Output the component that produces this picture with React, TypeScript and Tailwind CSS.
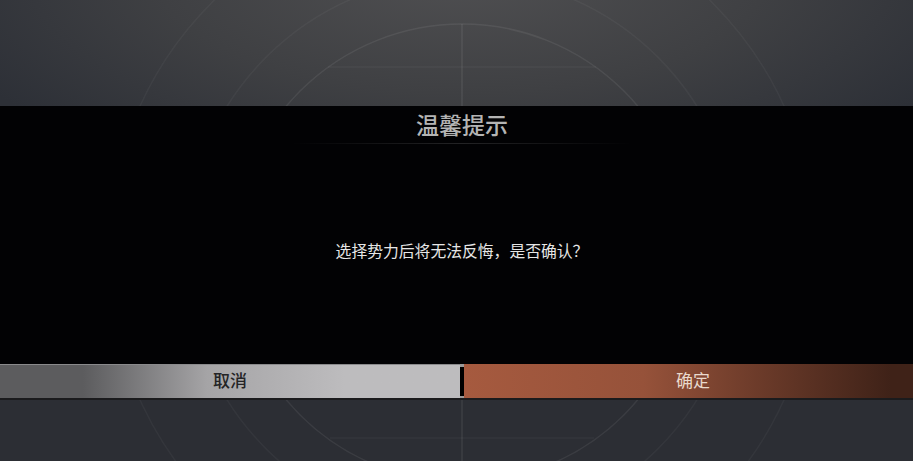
const cjk = "font-['Noto_Sans_CJK_SC','Noto_Sans',sans-serif]";

function Backdrop() {
  return (
    <svg className="absolute inset-0 h-full w-full" viewBox="0 0 913 461" fill="none">
      <defs>
        <radialGradient id="glow" gradientUnits="userSpaceOnUse" cx="462" cy="-30" r="560" gradientTransform="translate(462 -30) scale(1 0.4) translate(-462 30)">
          <stop offset="0" stopColor="#505052" />
          <stop offset="0.55" stopColor="#3f4043" />
          <stop offset="1" stopColor="#2d3037" />
        </radialGradient>
      </defs>
      <rect width="913" height="461" fill="#2c2e34" />
      <rect width="913" height="106" fill="url(#glow)" />
      <g stroke="#ffffff" strokeOpacity="0.04" strokeWidth="1.5">
        <circle cx="462" cy="253" r="229" strokeOpacity="0.07" />
        <circle cx="462" cy="253" r="277" />
        <circle cx="462" cy="253" r="354" />
        <path d="M328 67H596M330 438H594" />
        <path d="M462 24V482" strokeWidth="1" strokeOpacity="0.12" />
      </g>
    </svg>
  );
}

export default function App() {
  return (
    <div className={`relative h-[461px] w-[913px] overflow-hidden ${cjk}`}>
      <Backdrop />
      <div className="relative flex h-full flex-col">
        <div className="h-[106px] shrink-0" />
        <div className="flex h-[258px] shrink-0 flex-col items-center bg-[#020204] pl-[11px]">
          <h1 className="mt-[2px] mb-[2px] h-[33px] text-[23px] leading-[33px] font-medium text-[#b4b4b4]">温馨提示</h1>
          <div className="h-px w-[340px] bg-gradient-to-r from-transparent via-[#232325] to-transparent" />
          <p className="mt-[97px] text-[15.8px] leading-[20px] text-[#e6e6e6]">选择势力后将无法反悔，是否确认？</p>
        </div>
        <div className="flex h-[34px] shrink-0">
          <button className="h-full w-[460px] border-t border-[#8a8a8c] bg-gradient-to-r from-[#5c5c5e] from-18% via-[#a5a4a6] via-45% to-[#bdbcbe] to-75% pb-[3px] text-[17px] font-medium text-[#242426]">
            取消
          </button>
          <div className="flex h-full w-[4px] items-center bg-[#9a9a9a]">
            <div className="h-[29px] w-full bg-black" />
          </div>
          <button className="h-full flex-1 bg-gradient-to-r from-[#a65a3f] via-[#96523a] via-40% to-[#3f2218] to-95% pb-[3px] pl-[9px] text-[17px] text-[#e9d9cd]">
            确定
          </button>
        </div>
        <div className="h-[2px] shrink-0 bg-[#1b1b1d]" />
      </div>
    </div>
  );
}
